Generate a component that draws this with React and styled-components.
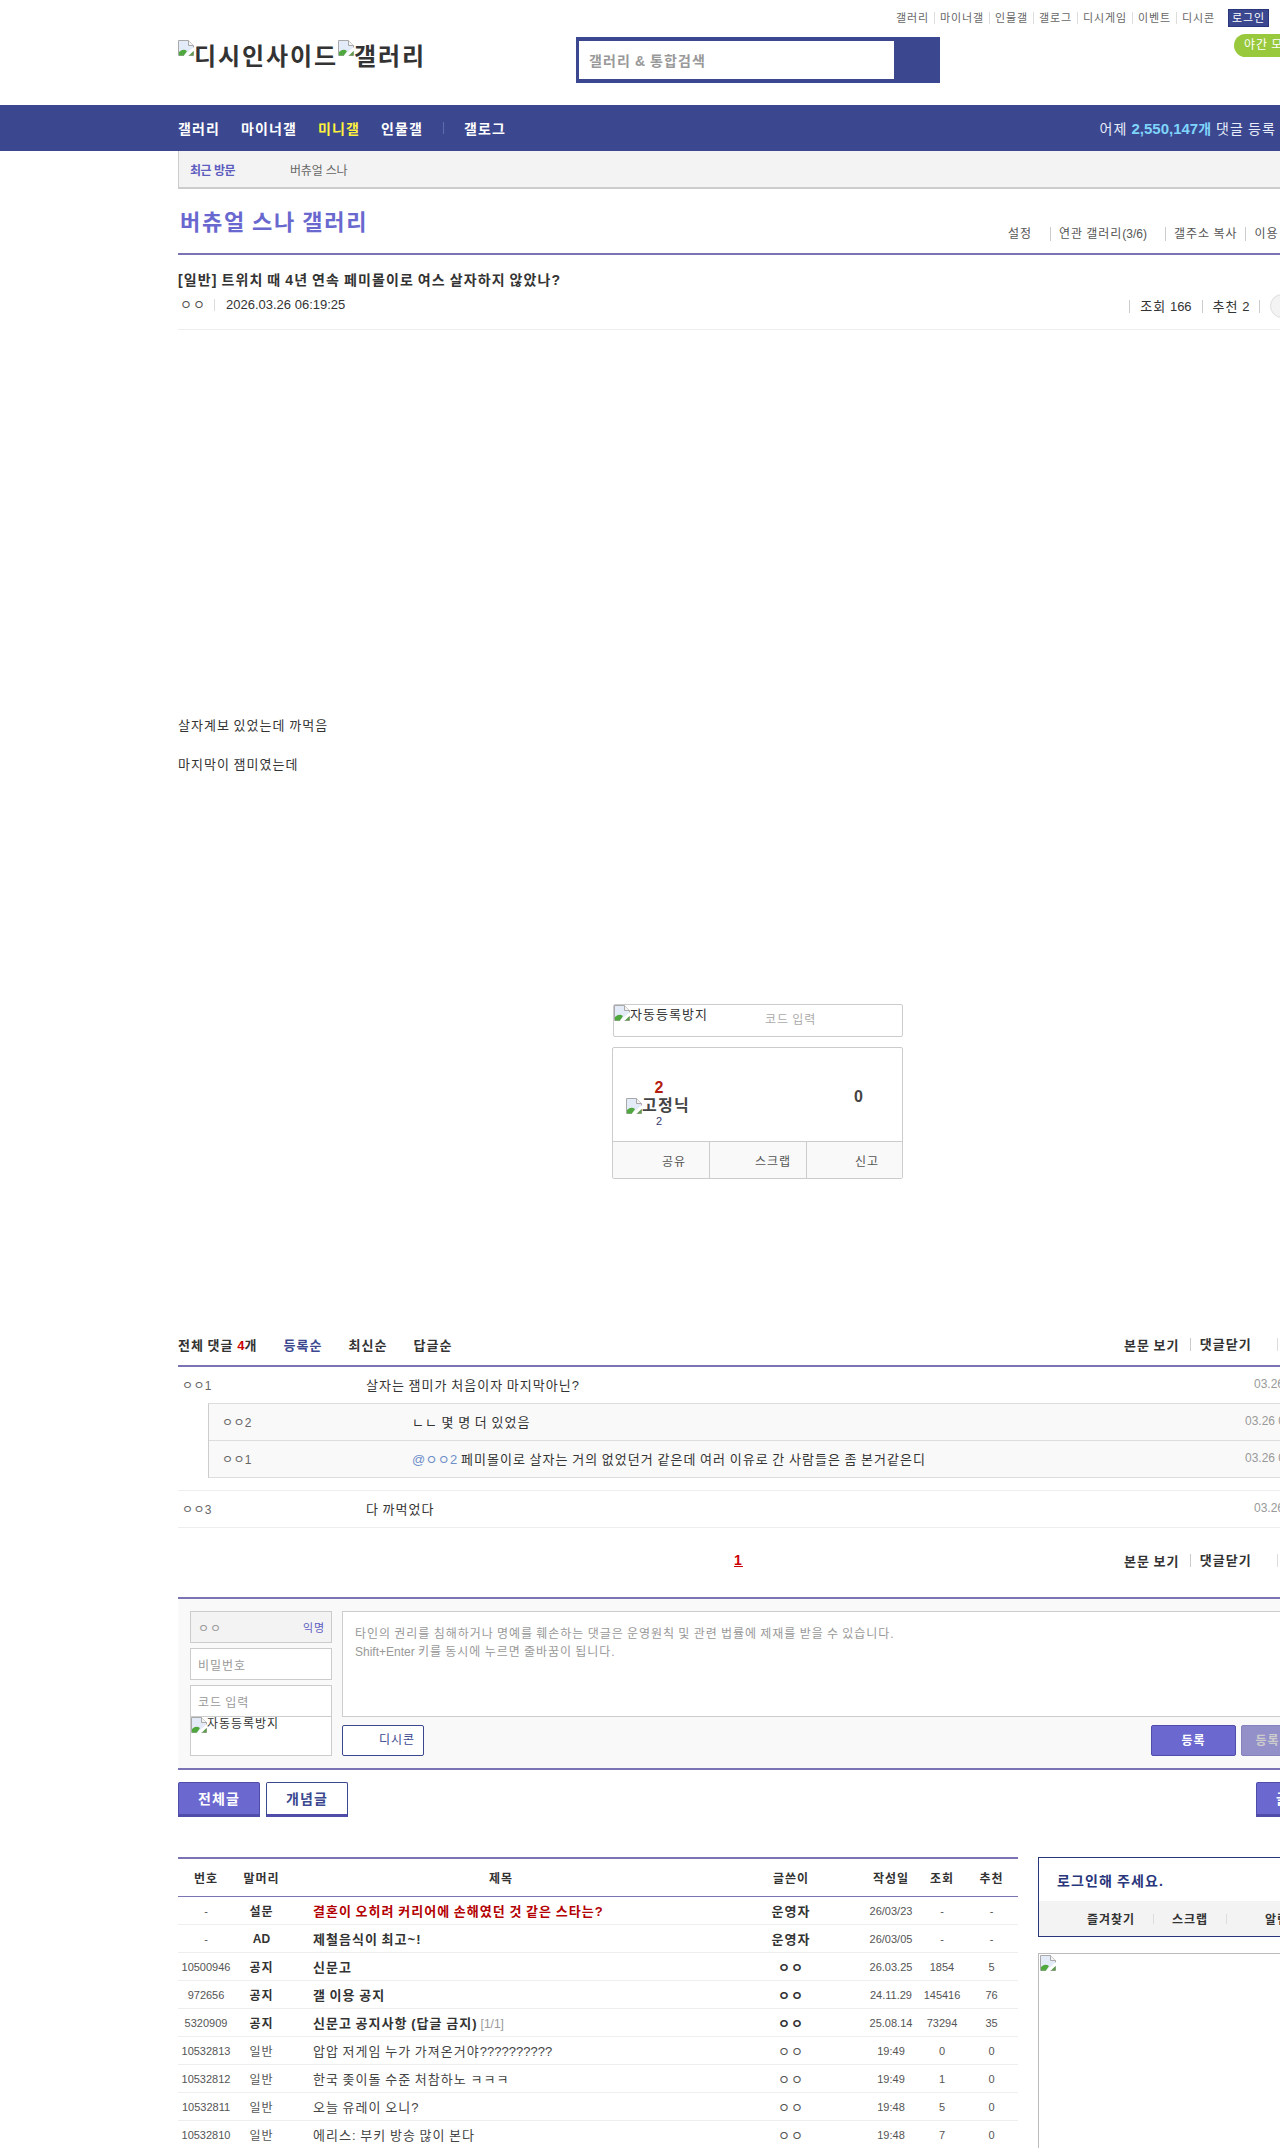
import React from 'react';
import styled, { createGlobalStyle } from 'styled-components';

// Noto hangul runs at .92em, the page has it at a full em: make up the rest with tracking
const Global = createGlobalStyle`
	html, body { margin:0; padding:0; background:#fff; }
	body { font-family:"Liberation Sans","Noto Sans CJK KR",sans-serif; color:#333; }
	* { letter-spacing:.08em; word-spacing:-.08em; }
	#root { width:1280px; height:2148px; overflow:hidden; }
`;

const Page = styled.div`
	width:1280px;
	height:2148px;
	overflow:hidden;
`;

const Content = styled.div`
	width:1160px;
	margin-left:178px;
`;

const Num = styled.span`
	letter-spacing:0;
	word-spacing:0;
`;

const Header = styled.header`
	height:105px;
	width:1160px;
	margin-left:178px;
`;

const TopLinks = styled.div`
	display:flex;
	justify-content:flex-end;
	align-items:center;
	height:18px;
	padding:9px 69px 7px 0;
	font-size:11px;
	color:#666;
`;

const TopLink = styled.a`
	display:block;
	padding:0 5px 0 5px;
	line-height:12px;
	border-left:${p => (p.$first ? 'none' : '1px solid #ddd')};
`;

const LoginBtn = styled.a`
	display:block;
	width:39px;
	height:16px;
	margin-left:8px;
	line-height:17px;
	text-align:center;
	color:#fff;
	background:#3b4890;
	border:1px solid #29367c;
`;

const HeaderMain = styled.div`
	display:flex;
	align-items:flex-start;
`;

const Logo = styled.div`
	width:398px;
	display:flex;
	align-items:flex-start;
	padding-top:9px;
	font-size:24px;
	font-weight:bold;
	line-height:28px;
	color:#333;
	svg { margin-top:-3px; }
`;

const Search = styled.div`
	width:314px;
	height:38px;
	margin-top:3px;
	padding:4px 47px 4px 3px;
	background:#3b4890;
	flex:none;
`;

const SearchInput = styled.div`
	height:38px;
	width:305px;
	padding-left:10px;
	background:#fff;
	color:#999;
	font-size:14px;
	font-weight:bold;
	line-height:40px;
`;

const NightPill = styled.div`
	margin-left:294px;
	flex:none;
	width:90px;
	height:23px;
	padding-left:10px;
	box-sizing:border-box;
	line-height:23px;
	font-size:12px;
	color:#fff;
	background:#98c93c;
	border-radius:12px 0 0 12px;
`;

const Nav = styled.nav`
	height:46px;
	background:#3b4890;
	padding-left:178px;
	width:1280px;
	box-sizing:border-box;
	display:flex;
	align-items:center;
	font-size:14px;
	font-weight:bold;
	color:#fff;
`;

const NavItem = styled.a`
	margin-right:${p => p.$gap || 21}px;
	color:${p => (p.$on ? '#fff23c' : '#fff')};
`;

const NavSep = styled.span`
	width:1px;
	height:12px;
	background:#5f6bad;
	margin-right:20px;
`;

const NavStat = styled.div`
	margin-left:auto;
	margin-right:4px;
	font-weight:normal;
	color:#e8ecf8;
	b { color:#7fd4fb; font-weight:bold; }
	b span { font-size:15px; }
`;

const RecentBar = styled.div`
	height:36px;
	display:flex;
	align-items:center;
	padding-left:11px;
	background:#f3f3f3;
	border-left:1px solid #ccc;
	border-bottom:2px solid #ccc;
	font-size:12px;
	color:#666;
`;

const RecentLabel = styled.strong`
	width:100px;
	color:#5d5dc0;
	letter-spacing:-.5px;
	word-spacing:0;
`;

const RecentItem = styled.span`
	letter-spacing:-.2px;
	word-spacing:0;
`;

const GallHead = styled.div`
	height:64px;
	display:flex;
	justify-content:space-between;
	align-items:flex-start;
	border-bottom:2px solid #7a74b4;
`;

const GallTitle = styled.h2`
	margin:20px 0 0 2px;
	font-size:22px;
	font-weight:bold;
	line-height:28px;
	color:#6968cf;
`;

const GallTools = styled.div`
	display:flex;
	margin:38px 0 0 0;
	font-size:12px;
	line-height:14px;
	color:#555;
	width:330px;
	white-space:nowrap;
`;

const Tool = styled.span`
	margin-right:${p => p.$gap}px;
	padding-left:${p => (p.$sep ? 8 : 0)}px;
	border-left:${p => (p.$sep ? '1px solid #ccc' : 'none')};
`;

const PostHead = styled.div`
	box-sizing:border-box;
	height:75px;
	border-bottom:1px solid #eee;
`;

const PostTitle = styled.h3`
	margin:0;
	padding-top:16px;
	font-size:14px;
	line-height:18px;
	color:#333;
`;

const PostMeta = styled.div`
	display:flex;
	align-items:center;
	margin-top:2px;
	font-size:13px;
	line-height:16px;
`;

const Writer = styled.span`
	width:37px;
	padding-left:2px;
	box-sizing:border-box;
	color:#555;
	border-right:1px solid #ddd;
	line-height:12px;
	margin-right:11px;
`;

const MetaRight = styled.div`
	display:flex;
	align-items:center;
	margin:3px 0 0 784px;
`;

const MetaItem = styled.span`
	padding:0 10px;
	border-left:1px solid #ccc;
	line-height:13px;
	white-space:nowrap;
	&:empty { padding:0 10px 0 0; min-height:13px; }
`;

const MetaCircle = styled.span`
	flex:none;
	width:22px;
	height:22px;
	border-radius:50%;
	background:#f3f3f3;
	border:1px solid #ddd;
`;

const PostBody = styled.div`
	height:674px;
	box-sizing:border-box;
	padding-top:386px;
	font-size:13px;
	line-height:19px;
	color:#333;
	p { margin:0 0 20px 0; }
`;

const CaptchaBox = styled.div`
	width:288px;
	height:31px;
	margin-left:435px;
	border:1px solid #ccc;
	border-radius:2px;
	display:flex;
	align-items:flex-start;
	font-size:13px;
	line-height:19px;
`;

const CaptchaPlaceholder = styled.span`
	margin:6px 0 0 57px;
	font-size:12px;
	color:#aaa;
`;

const RecomBox = styled.div`
	width:289px;
	height:130px;
	margin:10px 0 150px 434px;
	border:1px solid #ccc;
	border-radius:2px;
`;

const RecomTop = styled.div`
	height:93px;
	display:flex;
	border-bottom:1px solid #ccc;
`;

const RecomUp = styled.div`
	width:100px;
	padding:31px 0 0 13px;
	box-sizing:border-box;
`;

const RecomCount = styled.div`
	width:66px;
	text-align:center;
	font-size:16px;
	font-weight:bold;
	line-height:18px;
	letter-spacing:0;
	color:${p => p.$c || '#333'};
`;

const FixedLine = styled.div`
	display:flex;
	align-items:center;
	height:20px;
	margin-top:-1px;
	font-size:16px;
	font-weight:bold;
	line-height:20px;
	color:#444;
`;

const RecomFix = styled.div`
	width:66px;
	text-align:center;
	font-size:11px;
	line-height:14px;
	margin-top:-2px;
	letter-spacing:0;
	color:#33386b;
`;

const RecomDown = styled.div`
	width:88px;
	margin:40px 0 0 103px;
	text-align:center;
	font-size:16px;
	font-weight:bold;
	line-height:18px;
	letter-spacing:0;
	color:#444;
`;

const RecomBottom = styled.div`
	height:36px;
	display:flex;
	background:#f9f9f9;
	font-size:12px;
	line-height:40px;
	color:#555;
`;

const RecomBtn = styled.div`
	width:${p => p.$w}px;
	box-sizing:border-box;
	text-align:right;
	padding-right:${p => p.$pr}px;
	border-left:${p => (p.$line ? '1px solid #ccc' : 'none')};
`;

const CmtHead = styled.div`
	height:31px;
	padding-bottom:5px;
	display:flex;
	align-items:center;
	font-size:13px;
	font-weight:bold;
	border-bottom:2px solid #7a74b4;
	em { font-style:normal; color:#c00; letter-spacing:0; }
`;

const Sort = styled.a`
	margin-left:26px;
	color:${p => (p.$on ? '#3b4890' : '#333')};
`;

const CmtRight = styled.div`
	display:flex;
	align-items:center;
	margin-left:auto;
	width:214px;
	font-size:13px;
	font-weight:bold;
	white-space:nowrap;
	span + span { margin-left:10px; padding-left:9px; border-left:1px solid #ccc; line-height:13px; }
	i { width:1px; height:13px; margin-left:25px; background:#ddd; }
`;

const CmtRow = styled.div`
	display:flex;
	align-items:center;
	box-sizing:border-box;
	height:${p => p.$h}px;
	padding-bottom:2px;
	font-size:13px;
	border-bottom:${p => (p.$line ? `1px solid ${p.$line}` : 'none')};
`;

const CmtName = styled.span`
	flex:none;
	width:${p => p.$w}px;
	padding-left:${p => p.$pl}px;
	box-sizing:border-box;
	color:#666;
	font-size:12px;
	letter-spacing:.03em;
`;

const CmtText = styled.span`
	flex:none;
	width:${p => p.$w}px;
	color:#333;
	font-size:13px;
	a { color:#6f8fc8; letter-spacing:.02em; }
`;

const CmtDate = styled.span`
	color:#999;
	font-size:12px;
	white-space:nowrap;
	letter-spacing:0;
	word-spacing:0;
`;

const ReplyBox = styled.div`
	margin-left:30px;
	box-sizing:border-box;
	height:75px;
	border:1px solid #ddd;
	border-left:1px solid #ccc;
	background:#f9f9f9;
`;

const CmtSpacer = styled.div`
	box-sizing:border-box;
	height:13px;
	border-bottom:1px solid #eee;
`;

const CmtBottom = styled.div`
	box-sizing:border-box;
	height:69px;
	padding-bottom:5px;
	display:flex;
	align-items:center;
	font-size:14px;
`;

const PageNo = styled.a`
	margin-left:556px;
	font-weight:bold;
	color:#c00;
	text-decoration:underline;
`;

const WriteForm = styled.div`
	display:flex;
	height:169px;
	padding:0 0 0 12px;
	background:#f9f9f9;
	border-top:2px solid #7a74b4;
	border-bottom:2px solid #7a74b4;
`;

const FormLeft = styled.div`
	flex:none;
	width:142px;
	padding-top:12px;
	margin-right:10px;
`;

const Field = styled.div`
	height:30px;
	margin-bottom:${p => (p.$tight ? 0 : 5)}px;
	padding:0 7px;
	display:flex;
	align-items:center;
	justify-content:space-between;
	border:1px solid #ccc;
	background:${p => p.$bg || '#fff'};
	font-size:12px;
	color:#999;
	b { font-weight:normal; font-size:11px; color:#5d5dc0; margin-right:-1px; }
`;

const FieldCaptcha = styled.div`
	height:38px;
	display:flex;
	align-items:flex-start;
	border:1px solid #ccc;
	border-top:none;
	background:#fff;
	font-size:12px;
	line-height:14px;
	color:#333;
`;

const FormRight = styled.div`
	flex:none;
	width:986px;
	padding-top:12px;
`;

const TextArea = styled.div`
	height:91px;
	padding:13px 12px 0;
	border:1px solid #ccc;
	background:#fff;
	font-size:12px;
	line-height:18px;
	color:#999;
`;

const FormBtns = styled.div`
	display:flex;
	margin-top:8px;
`;

const DcconBtn = styled.a`
	padding-right:8px;
	box-sizing:border-box;
	width:82px;
	height:31px;
	text-align:right;
	line-height:29px;
	font-size:12px;
	color:#3b4890;
	background:#fff;
	border:1px solid #3b4890;
	border-radius:2px;
`;

const SubmitBtn = styled.a`
	flex:none;
	width:85px;
	height:31px;
	margin-left:${p => p.$ml}px;
	box-sizing:border-box;
	text-align:center;
	line-height:30px;
	font-size:12px;
	font-weight:bold;
	white-space:nowrap;
	color:${p => (p.$off ? '#ccc' : '#fff')};
	background:${p => (p.$off ? '#9390c9' : '#6b68d0')};
	border:1px solid ${p => (p.$off ? '#8481bd' : '#4f4caa')};
	border-radius:2px;
`;

const ListBtns = styled.div`
	display:flex;
	padding-top:12px;
	height:35px;
	margin-bottom:40px;
`;

const ListBtn = styled.a`
	flex:none;
	width:82px;
	height:35px;
	margin-left:${p => p.$ml || 0}px;
	box-sizing:border-box;
	text-align:center;
	line-height:33px;
	font-size:14px;
	font-weight:bold;
	color:${p => (p.$solid ? '#fff' : '#3b4890')};
	background:${p => (p.$solid ? '#6b68d0' : '#fff')};
	border:1px solid ${p => (p.$solid ? '#4f4caa' : '#3b4890')};
	border-bottom:3px solid #4f4caa;
	border-radius:2px 2px 0 0;
`;

const Lower = styled.div`
	display:flex;
	align-items:flex-start;
`;

const ListTable = styled.table`
	flex:none;
	width:840px;
	table-layout:fixed;
	border-collapse:collapse;
	border-top:2px solid #7a74b4;
	font-size:11px;
	color:#555;
`;

const Th = styled.th`
	height:37px;
	padding:0 ${p => p.$pr || 0}px 0 0;
	font-size:12px;
	font-weight:bold;
	color:#333;
	border-bottom:1px solid #7a74b4;
`;

const Tr = styled.tr`
	height:28px;
	border-bottom:1px solid #eee;
`;

const Td = styled.td`
	padding:0;
	text-align:center;
	font-size:${p => p.$size || 11}px;
	font-weight:${p => (p.$bold ? 'bold' : 'normal')};
	color:${p => p.$c || '#555'};
	white-space:nowrap;
	letter-spacing:${p => (p.$ko ? '.08em' : '0')};
`;

const TitleTd = styled.td`
	padding:0 0 0 24px;
	font-size:13px;
	text-align:left;
	font-weight:${p => (p.$bold ? 'bold' : 'normal')};
	color:${p => p.$c || (p.$bold ? '#333' : '#444')};
	white-space:nowrap;
	small { font-size:12px; font-weight:normal; color:#999; margin-left:3px; letter-spacing:0; }
`;

const Side = styled.aside`
	flex:none;
	width:300px;
	margin-left:20px;
`;

const LoginBox = styled.div`
	height:78px;
	border:1px solid #29367c;
	margin-bottom:16px;
`;

const LoginTitle = styled.div`
	height:43px;
	padding:0 0 0 18px;
	font-size:14px;
	font-weight:bold;
	line-height:47px;
	color:#29367c;
`;

const LoginBar = styled.div`
	height:35px;
	display:flex;
	align-items:center;
	background:#f3f3f3;
	font-size:12px;
	font-weight:bold;
	color:#333;
	padding-left:48px;
	white-space:nowrap;
`;

const LoginBarItem = styled.span`
	margin-right:${p => p.$mr}px;
`;

const LoginBarSep = styled.i`
	width:1px;
	height:10px;
	background:#ddd;
	margin-right:${p => p.$mr}px;
`;

const AdBox = styled.div`
	height:195px;
	padding:1px;
	border:1px solid #bbb;
`;

const BrokenIconSvg = styled.svg`
	flex:none;
	display:inline-block;
	vertical-align:top;
`;

const BrokenIcon = () => (
	<BrokenIconSvg width="16" height="16" viewBox="0 0 16 16">
		<path d="M0.5 0.5H10.5L15.5 5.5V15.5H0.5Z" fill="#e3ebf9" stroke="#a9a9a9" />
		<path d="M1 15V12Q5 8 9 11L6 15.5H1Z" fill="#4fa83d" />
		<path d="M10.5 0.5V5.5H15.5" fill="#f4f4f4" stroke="#a9a9a9" />
		<path d="M16 7L6 15.5V16H10L16 11Z" fill="#fff" />
		<path d="M11 15.5H15.5V11Z" fill="#5e9c4c" />
	</BrokenIconSvg>
);

const rows = [
	{ no: '-', tag: '설문', title: '결혼이 오히려 커리어에 손해였던 것 같은 스타는?', by: '운영자', date: '26/03/23', v: '-', r: '-', hot: 1, bold: 1 },
	{ no: '-', tag: <Num>AD</Num>, title: '제철음식이 최고~!', by: '운영자', date: '26/03/05', v: '-', r: '-', bold: 1 },
	{ no: '10500946', tag: '공지', title: '신문고', by: 'ㅇㅇ', date: '26.03.25', v: '1854', r: '5', bold: 1 },
	{ no: '972656', tag: '공지', title: '갤 이용 공지', by: 'ㅇㅇ', date: '24.11.29', v: '145416', r: '76', bold: 1 },
	{ no: '5320909', tag: '공지', title: '신문고 공지사항 (답글 금지)', extra: '[1/1]', by: 'ㅇㅇ', date: '25.08.14', v: '73294', r: '35', bold: 1 },
	{ no: '10532813', tag: '일반', title: '압압 저게임 누가 가져온거야', tail: '??????????', by: 'ㅇㅇ', date: '19:49', v: '0', r: '0' },
	{ no: '10532812', tag: '일반', title: '한국 좆이돌 수준 처참하노 ㅋㅋㅋ', by: 'ㅇㅇ', date: '19:49', v: '1', r: '0' },
	{ no: '10532811', tag: '일반', title: '오늘 유레이 오니?', by: 'ㅇㅇ', date: '19:48', v: '5', r: '0' },
	{ no: '10532810', tag: '일반', title: '에리스: 부키 방송 많이 본다', by: 'ㅇㅇ', date: '19:48', v: '7', r: '0' },
];

const topLinks = ['갤러리', '마이너갤', '인물갤', '갤로그', '디시게임', '이벤트', '디시콘'];

const CmtTools = () => (
	<CmtRight>
		<span>본문 보기</span>
		<span>댓글닫기</span>
		<i />
	</CmtRight>
);

const App = () => (
	<Page>
		<Global />
		<Header>
			<TopLinks>
				{topLinks.map((t, i) => <TopLink key={t} $first={i === 0}>{t}</TopLink>)}
				<LoginBtn>로그인</LoginBtn>
			</TopLinks>
			<HeaderMain>
				<Logo><BrokenIcon />디시인사이드<BrokenIcon />갤러리</Logo>
				<Search><SearchInput>갤러리 &amp; 통합검색</SearchInput></Search>
				<NightPill>야간 모드</NightPill>
			</HeaderMain>
		</Header>
		<Nav>
			<NavItem>갤러리</NavItem>
			<NavItem>마이너갤</NavItem>
			<NavItem $on>미니갤</NavItem>
			<NavItem $gap={20}>인물갤</NavItem>
			<NavSep />
			<NavItem>갤로그</NavItem>
			<NavStat>어제 <b><Num>2,550,147</Num>개</b> 댓글 등록</NavStat>
		</Nav>
		<Content>
			<RecentBar>
				<RecentLabel>최근 방문</RecentLabel>
				<RecentItem>버츄얼 스나</RecentItem>
			</RecentBar>
			<GallHead>
				<GallTitle>버츄얼 스나 갤러리</GallTitle>
				<GallTools>
					<Tool $gap={18}>설정</Tool>
					<Tool $sep $gap={18}>연관 갤러리<Num>(3/6)</Num></Tool>
					<Tool $sep $gap={8}>갤주소 복사</Tool>
					<Tool $sep>이용 안내</Tool>
				</GallTools>
			</GallHead>
			<PostHead>
				<PostTitle>[일반] 트위치 때 4년 연속 페미몰이로 여스 살자하지 않았나?</PostTitle>
				<PostMeta>
					<Writer>ㅇㅇ</Writer>
					<Num>2026.03.26 06:19:25</Num>
					<MetaRight>
						<MetaItem>조회 <Num>166</Num></MetaItem>
						<MetaItem>추천 <Num>2</Num></MetaItem>
						<MetaItem />
						<MetaCircle />
					</MetaRight>
				</PostMeta>
			</PostHead>
			<PostBody>
				<p>살자계보 있었는데 까먹음</p>
				<p>마지막이 잼미였는데</p>
			</PostBody>
			<CaptchaBox>
				<BrokenIcon />자동등록방지
				<CaptchaPlaceholder>코드 입력</CaptchaPlaceholder>
			</CaptchaBox>
			<RecomBox>
				<RecomTop>
					<RecomUp>
						<RecomCount $c="#b51c10">2</RecomCount>
						<FixedLine><BrokenIcon />고정닉</FixedLine>
						<RecomFix>2</RecomFix>
					</RecomUp>
					<RecomDown>0</RecomDown>
				</RecomTop>
				<RecomBottom>
					<RecomBtn $w={96} $pr={23}>공유</RecomBtn>
					<RecomBtn $w={97} $pr={15} $line>스크랩</RecomBtn>
					<RecomBtn $w={96} $pr={23} $line>신고</RecomBtn>
				</RecomBottom>
			</RecomBox>
			<CmtHead>
				<span>전체 댓글 <em>4</em>개</span>
				<Sort $on>등록순</Sort>
				<Sort>최신순</Sort>
				<Sort>답글순</Sort>
				<CmtTools />
			</CmtHead>
			<CmtRow $h={36}>
				<CmtName $w={188} $pl={4}>ㅇㅇ1</CmtName>
				<CmtText $w={888}>살자는 잼미가 처음이자 마지막아닌?</CmtText>
				<CmtDate>03.26 06:20:13</CmtDate>
			</CmtRow>
			<ReplyBox>
				<CmtRow $h={37} $line="#ddd">
					<CmtName $w={203} $pl={13}>ㅇㅇ2</CmtName>
					<CmtText $w={833}>ㄴㄴ 몇 명 더 있었음</CmtText>
					<CmtDate>03.26 06:21:02</CmtDate>
				</CmtRow>
				<CmtRow $h={36}>
					<CmtName $w={203} $pl={13}>ㅇㅇ1</CmtName>
					<CmtText $w={833}><a>@ㅇㅇ2</a> 페미몰이로 살자는 거의 없었던거 같은데 여러 이유로 간 사람들은 좀 본거같은디</CmtText>
					<CmtDate>03.26 06:22:40</CmtDate>
				</CmtRow>
			</ReplyBox>
			<CmtSpacer />
			<CmtRow $h={37} $line="#eee">
				<CmtName $w={188} $pl={4}>ㅇㅇ3</CmtName>
				<CmtText $w={888}>다 까먹었다</CmtText>
				<CmtDate>03.26 06:30:11</CmtDate>
			</CmtRow>
			<CmtBottom>
				<PageNo>1</PageNo>
				<CmtTools />
			</CmtBottom>
			<WriteForm>
				<FormLeft>
					<Field $bg="#f3f3f3"><span>ㅇㅇ</span><b>익명</b></Field>
					<Field>비밀번호</Field>
					<Field $tight>코드 입력</Field>
					<FieldCaptcha><BrokenIcon />자동등록방지</FieldCaptcha>
				</FormLeft>
				<FormRight>
					<TextArea>
						타인의 권리를 침해하거나 명예를 훼손하는 댓글은 운영원칙 및 관련 법률에 제재를 받을 수 있습니다.<br />
						<Num>Shift+Enter</Num> 키를 동시에 누르면 줄바꿈이 됩니다.
					</TextArea>
					<FormBtns>
						<DcconBtn>디시콘</DcconBtn>
						<SubmitBtn $ml={727}>등록</SubmitBtn>
						<SubmitBtn $ml={5} $off>등록+추천</SubmitBtn>
					</FormBtns>
				</FormRight>
			</WriteForm>
			<ListBtns>
				<ListBtn $solid>전체글</ListBtn>
				<ListBtn $ml={6}>개념글</ListBtn>
				<ListBtn $solid $ml={908}>글쓰기</ListBtn>
			</ListBtns>
			<Lower>
				<ListTable>
					<colgroup>
						<col width="56" /><col width="55" /><col width="430" /><col width="144" /><col width="56" /><col width="46" /><col width="53" />
					</colgroup>
					<thead>
						<tr>
							<Th>번호</Th><Th>말머리</Th><Th $pr={6}>제목</Th><Th>글쓴이</Th><Th>작성일</Th><Th>조회</Th><Th>추천</Th>
						</tr>
					</thead>
					<tbody>
						{rows.map((r, i) => (
							<Tr key={i}>
								<Td>{r.no}</Td>
								<Td $ko $size={12} $bold={r.bold} $c={r.bold ? '#333' : '#555'}>{r.tag}</Td>
								<TitleTd $bold={r.bold} $c={r.hot ? '#b30000' : undefined}>
									{r.title}{r.tail && <Num>{r.tail}</Num>}{r.extra && <small>{r.extra}</small>}
								</TitleTd>
								<Td $ko $size={13} $bold={r.bold} $c={r.bold ? '#333' : '#555'}>{r.by}</Td>
								<Td>{r.date}</Td>
								<Td>{r.v}</Td>
								<Td>{r.r}</Td>
							</Tr>
						))}
					</tbody>
				</ListTable>
				<Side>
					<LoginBox>
						<LoginTitle>로그인해 주세요.</LoginTitle>
						<LoginBar>
							<LoginBarItem $mr={18}>즐겨찾기</LoginBarItem>
							<LoginBarSep $mr={18} />
							<LoginBarItem $mr={18}>스크랩</LoginBarItem>
							<LoginBarSep $mr={38} />
							<LoginBarItem>알림</LoginBarItem>
						</LoginBar>
					</LoginBox>
					<AdBox><BrokenIcon /></AdBox>
				</Side>
			</Lower>
		</Content>
	</Page>
);

export default App;
